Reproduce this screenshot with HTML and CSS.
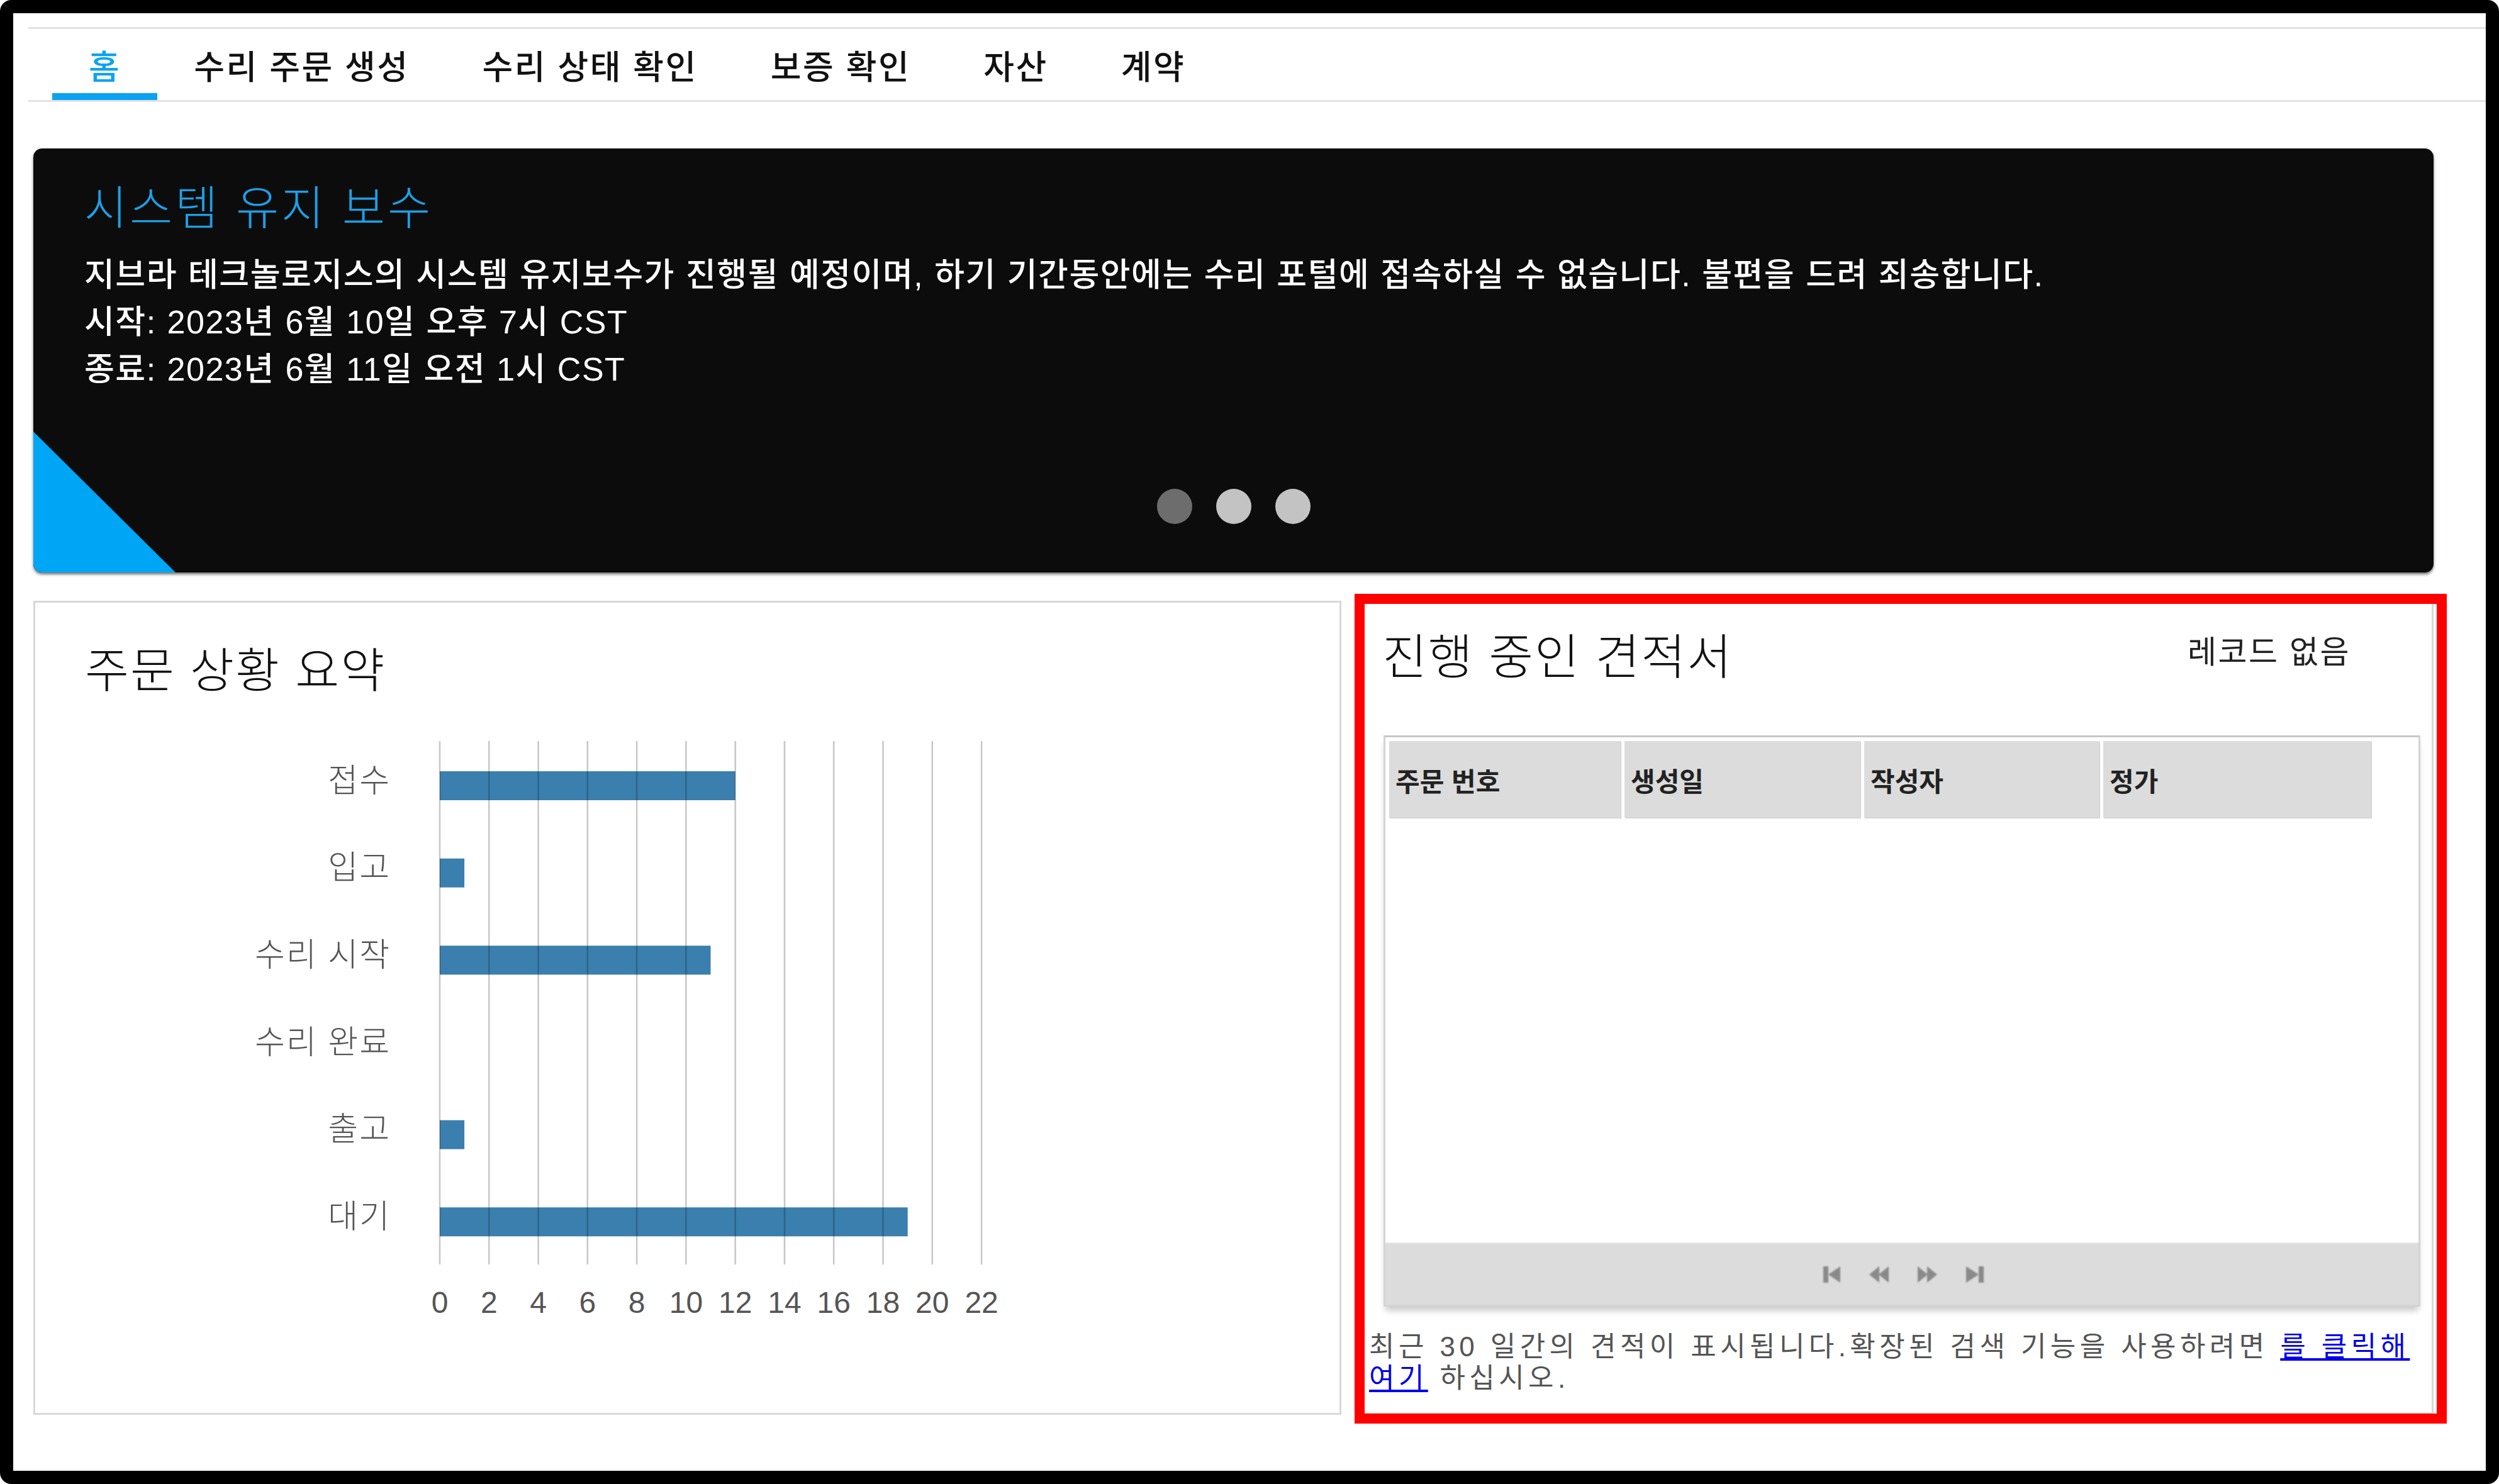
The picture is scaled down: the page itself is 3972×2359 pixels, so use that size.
FILE: index.html
```html
<!DOCTYPE html>
<html lang="ko">
<head>
<meta charset="utf-8">
<title>수리 포털</title>
<link rel="stylesheet" href="styles.css">
</head>
<body>
<div class="frame">
  <nav class="tabs">
    <ul class="tab-list">
      <li class="tab active">홈</li>
      <li class="tab">수리 주문 생성</li>
      <li class="tab">수리 상태 확인</li>
      <li class="tab">보증 확인</li>
      <li class="tab">자산</li>
      <li class="tab">계약</li>
    </ul>
  </nav>
  <main class="content">
    <section class="banner">
      <h1 class="banner-title">시스템 유지 보수</h1>
      <p class="banner-text">지브라 테크놀로지스의 시스템 유지보수가 진행될 예정이며, 하기 기간동안에는 수리 포털에 접속하실 수 없습니다. 불편을 드려 죄송합니다.<br>시작: 2023년 6월 10일 오후 7시 CST<br>종료: 2023년 6월 11일 오전 1시 CST</p>
      <div class="dots"><span class="dot active"></span><span class="dot"></span><span class="dot"></span></div>
      <div class="corner"></div>
    </section>
    <div class="panels">
      <section class="panel summary">
        <h2 class="panel-title">주문 상황 요약</h2>
        <svg class="chart" width="2073" height="1136" viewBox="0 0 2073 1136">
          <g class="bars">
            <rect x="643" y="116" width="469.7" height="46"/>
            <rect x="643" y="254.7" width="39.1" height="46"/>
            <rect x="643" y="393.3" width="430.5" height="46"/>
            <rect x="643" y="670.7" width="39.1" height="46"/>
            <rect x="643" y="809.3" width="743.7" height="46"/>
          </g>
          <g class="grid-lines">
            <line x1="643" y1="68" x2="643" y2="900"/>
            <line x1="721.3" y1="68" x2="721.3" y2="900"/>
            <line x1="799.6" y1="68" x2="799.6" y2="900"/>
            <line x1="877.8" y1="68" x2="877.8" y2="900"/>
            <line x1="956.1" y1="68" x2="956.1" y2="900"/>
            <line x1="1034.4" y1="68" x2="1034.4" y2="900"/>
            <line x1="1112.7" y1="68" x2="1112.7" y2="900"/>
            <line x1="1191" y1="68" x2="1191" y2="900"/>
            <line x1="1269.2" y1="68" x2="1269.2" y2="900"/>
            <line x1="1347.5" y1="68" x2="1347.5" y2="900"/>
            <line x1="1425.8" y1="68" x2="1425.8" y2="900"/>
            <line x1="1504.1" y1="68" x2="1504.1" y2="900"/>
          </g>
          <g class="cat-labels">
            <text x="565" y="126">접수</text>
            <text x="565" y="264.7">입고</text>
            <text x="565" y="403.3">수리 시작</text>
            <text x="565" y="542">수리 완료</text>
            <text x="565" y="680.7">출고</text>
            <text x="565" y="819.3">대기</text>
          </g>
          <g class="axis-labels">
            <text x="643" y="960">0</text>
            <text x="721.3" y="960">2</text>
            <text x="799.6" y="960">4</text>
            <text x="877.8" y="960">6</text>
            <text x="956.1" y="960">8</text>
            <text x="1034.4" y="960">10</text>
            <text x="1112.7" y="960">12</text>
            <text x="1191" y="960">14</text>
            <text x="1269.2" y="960">16</text>
            <text x="1347.5" y="960">18</text>
            <text x="1425.8" y="960">20</text>
            <text x="1504.1" y="960">22</text>
          </g>
        </svg>
      </section>
      <section class="panel quotes">
        <div class="quotes-head">
          <h2 class="quotes-title">진행 중인 견적서</h2>
          <span class="no-records">레코드 없음</span>
        </div>
        <div class="grid">
          <div class="grid-header">
            <div class="hcell c1">주문 번호</div>
            <div class="hcell c2">생성일</div>
            <div class="hcell c3">작성자</div>
            <div class="hcell c4">정가</div>
          </div>
          <div class="grid-body"></div>
          <div class="pager">
            <svg class="pg" width="27" height="26" viewBox="0 0 27 26"><rect x="0" y="0" width="8" height="26"/><polygon points="27,0 27,26 8,13"/></svg>
            <svg class="pg" width="31" height="26" viewBox="0 0 31 26"><polygon points="16,0 16,26 0,13"/><polygon points="31,0 31,26 15,13"/></svg>
            <svg class="pg" width="31" height="26" viewBox="0 0 31 26"><polygon points="0,0 0,26 16,13"/><polygon points="15,0 15,26 31,13"/></svg>
            <svg class="pg" width="28" height="26" viewBox="0 0 28 26"><polygon points="0,0 0,26 20,13"/><rect x="20" y="0" width="8" height="26"/></svg>
          </div>
        </div>
        <div class="note">
          <div class="note-line">최근 30 일간의 견적이 표시됩니다.확장된 검색 기능을 사용하려면 <a href="#" class="note-link">를 클릭해</a></div>
          <div class="note-line"><a href="#" class="note-link">여기</a> 하십시오.</div>
        </div>
        <div class="highlight"></div>
      </section>
    </div>
  </main>
</div>
</body>
</html>
```

FILE: styles.css
```css
html, body {
  margin: 0;
  padding: 0;
  background: #ffffff;
}

body {
  font-family: "Liberation Sans", "Noto Sans CJK KR", sans-serif;
  color: #111;
}

.frame {
  box-sizing: border-box;
  width: 3972px;
  height: 2359px;
  border: 21px solid #000;
  border-radius: 18px;
  background: #fff;
  padding-top: 22px;
  overflow: hidden;
}

/* ---------- tabs ---------- */
.tabs {
  margin-left: 24px;
  border-top: 3px solid #e3e3e3;
  border-bottom: 3px solid #e3e3e3;
}

.tab-list {
  display: flex;
  margin: 0;
  padding: 0 0 0 38px;
  list-style: none;
  height: 113px;
}

.tab {
  display: flex;
  align-items: center;
  padding: 0 58px;
  font-family: "Noto Sans CJK KR", sans-serif;
  font-size: 53px;
  font-weight: 500;
  letter-spacing: 2.5px;
  color: #111;
}

.tab.active {
  color: #0aa3f2;
  box-shadow: inset 0 -11px 0 #0aa3f2;
}

/* ---------- content ---------- */
.content {
  margin: 74px 0 0 32px;
  width: 3815px;
}

.banner {
  position: relative;
  display: flex;
  flex-direction: column;
  height: 674px;
  border-radius: 14px;
  background: #0b0c0b;
  overflow: hidden;
  box-shadow: 0 3px 4px rgba(0, 0, 0, 0.55);
}

.banner-title {
  margin: 47px 0 0 81px;
  font-family: "Noto Sans CJK KR", sans-serif;
  font-size: 74px;
  line-height: 84px;
  font-weight: 300;
  letter-spacing: 4px;
  color: #1d9fe8;
}

.banner-text {
  margin: 33px 0 0 81px;
  font-size: 52px;
  line-height: 75px;
  font-weight: 500;
  letter-spacing: 1.5px;
  word-spacing: 1px;
  color: #fff;
}

.dots {
  display: flex;
  gap: 38px;
  align-self: center;
  margin-top: auto;
  margin-bottom: 77px;
}

.dot {
  width: 56px;
  height: 56px;
  border-radius: 50%;
  background: #c3c3c3;
}

.dot.active {
  background: #6d6d6d;
}

.corner {
  position: absolute;
  left: 0;
  bottom: 0;
  width: 226px;
  height: 224px;
  background: #00a6f6;
  clip-path: polygon(0 0, 100% 100%, 0 100%);
}

/* ---------- panels ---------- */
.panels {
  display: flex;
  gap: 25px;
  margin-top: 45px;
}

.panel {
  box-sizing: border-box;
  height: 1294px;
  border: 3px solid #d8d8d8;
  background: #fff;
}

.summary {
  width: 2079px;
}

.panel-title {
  margin: 52px 0 0 79px;
  font-family: "Noto Sans CJK KR", sans-serif;
  font-size: 76px;
  line-height: 100px;
  font-weight: 300;
  letter-spacing: 2px;
  color: #111;
}

.chart {
  display: block;
}

.bars rect {
  fill: #3a7fae;
}

.grid-lines line {
  stroke: rgba(0, 0, 0, 0.22);
  stroke-width: 2.5;
}

.cat-labels text {
  font-family: "Noto Sans CJK KR", sans-serif;
  font-size: 52px;
  font-weight: 300;
  letter-spacing: 2px;
  fill: #555;
  text-anchor: end;
  dominant-baseline: central;
}

.axis-labels text {
  font-family: "Liberation Sans", sans-serif;
  font-size: 48px;
  fill: #555;
  text-anchor: middle;
  dominant-baseline: central;
}

/* ---------- quotes panel ---------- */
.quotes {
  position: relative;
  width: 1711px;
}

.quotes-head {
  display: flex;
  justify-content: space-between;
  align-items: center;
  height: 100px;
  margin: 31px 129px 0 37px;
}

.quotes-title {
  margin: 0;
  font-family: "Noto Sans CJK KR", sans-serif;
  font-size: 77px;
  line-height: 100px;
  font-weight: 300;
  letter-spacing: 2px;
  color: #111;
}

.no-records {
  font-family: "Noto Sans CJK KR", sans-serif;
  font-size: 50px;
  letter-spacing: 2.5px;
  color: #222;
  margin-top: -14px;
}

.grid {
  box-sizing: border-box;
  display: flex;
  flex-direction: column;
  height: 908px;
  margin: 80px 18px 0 39px;
  border: 3px solid #d4d4d4;
  border-top-color: #c8c8c8;
  background: #fff;
  box-shadow: 0 9px 10px -3px rgba(0, 0, 0, 0.22);
}

.grid-header {
  display: flex;
  gap: 6px;
  padding: 6px 0 0 6px;
}

.hcell {
  box-sizing: border-box;
  height: 122px;
  display: flex;
  align-items: center;
  padding-left: 10px;
  background: #dcdcdc;
  box-shadow: 1px 1px 0 #cfcfcf;
  font-family: "Noto Sans CJK KR", sans-serif;
  font-size: 42px;
  font-weight: 700;
  color: #222;
}

.c1 { width: 368px; }
.c2 { width: 375px; }
.c3 { width: 374px; }
.c4 { width: 426px; }

.grid-body {
  flex: 1;
}

.pager {
  display: flex;
  justify-content: center;
  align-items: center;
  gap: 46px;
  height: 97px;
  background: #dcdcdc;
  border-top: 2px solid #e6e6e6;
  padding-left: 4px;
}

.pg {
  fill: #8a8a8a;
  filter: blur(0.8px);
}

.note {
  margin: 39px 0 0 16px;
  font-family: "Liberation Sans", "Noto Sans CJK KR", sans-serif;
  font-size: 44px;
  letter-spacing: 6.4px;
  color: #555;
}

.note-line {
  height: 50px;
  line-height: 50px;
  white-space: nowrap;
}

.note-link {
  color: #0000ee;
  text-decoration: underline;
}

.highlight {
  position: absolute;
  left: -7px;
  top: -14px;
  right: -24px;
  bottom: -17px;
  border: 16px solid #ff0000;
  pointer-events: none;
}
```
